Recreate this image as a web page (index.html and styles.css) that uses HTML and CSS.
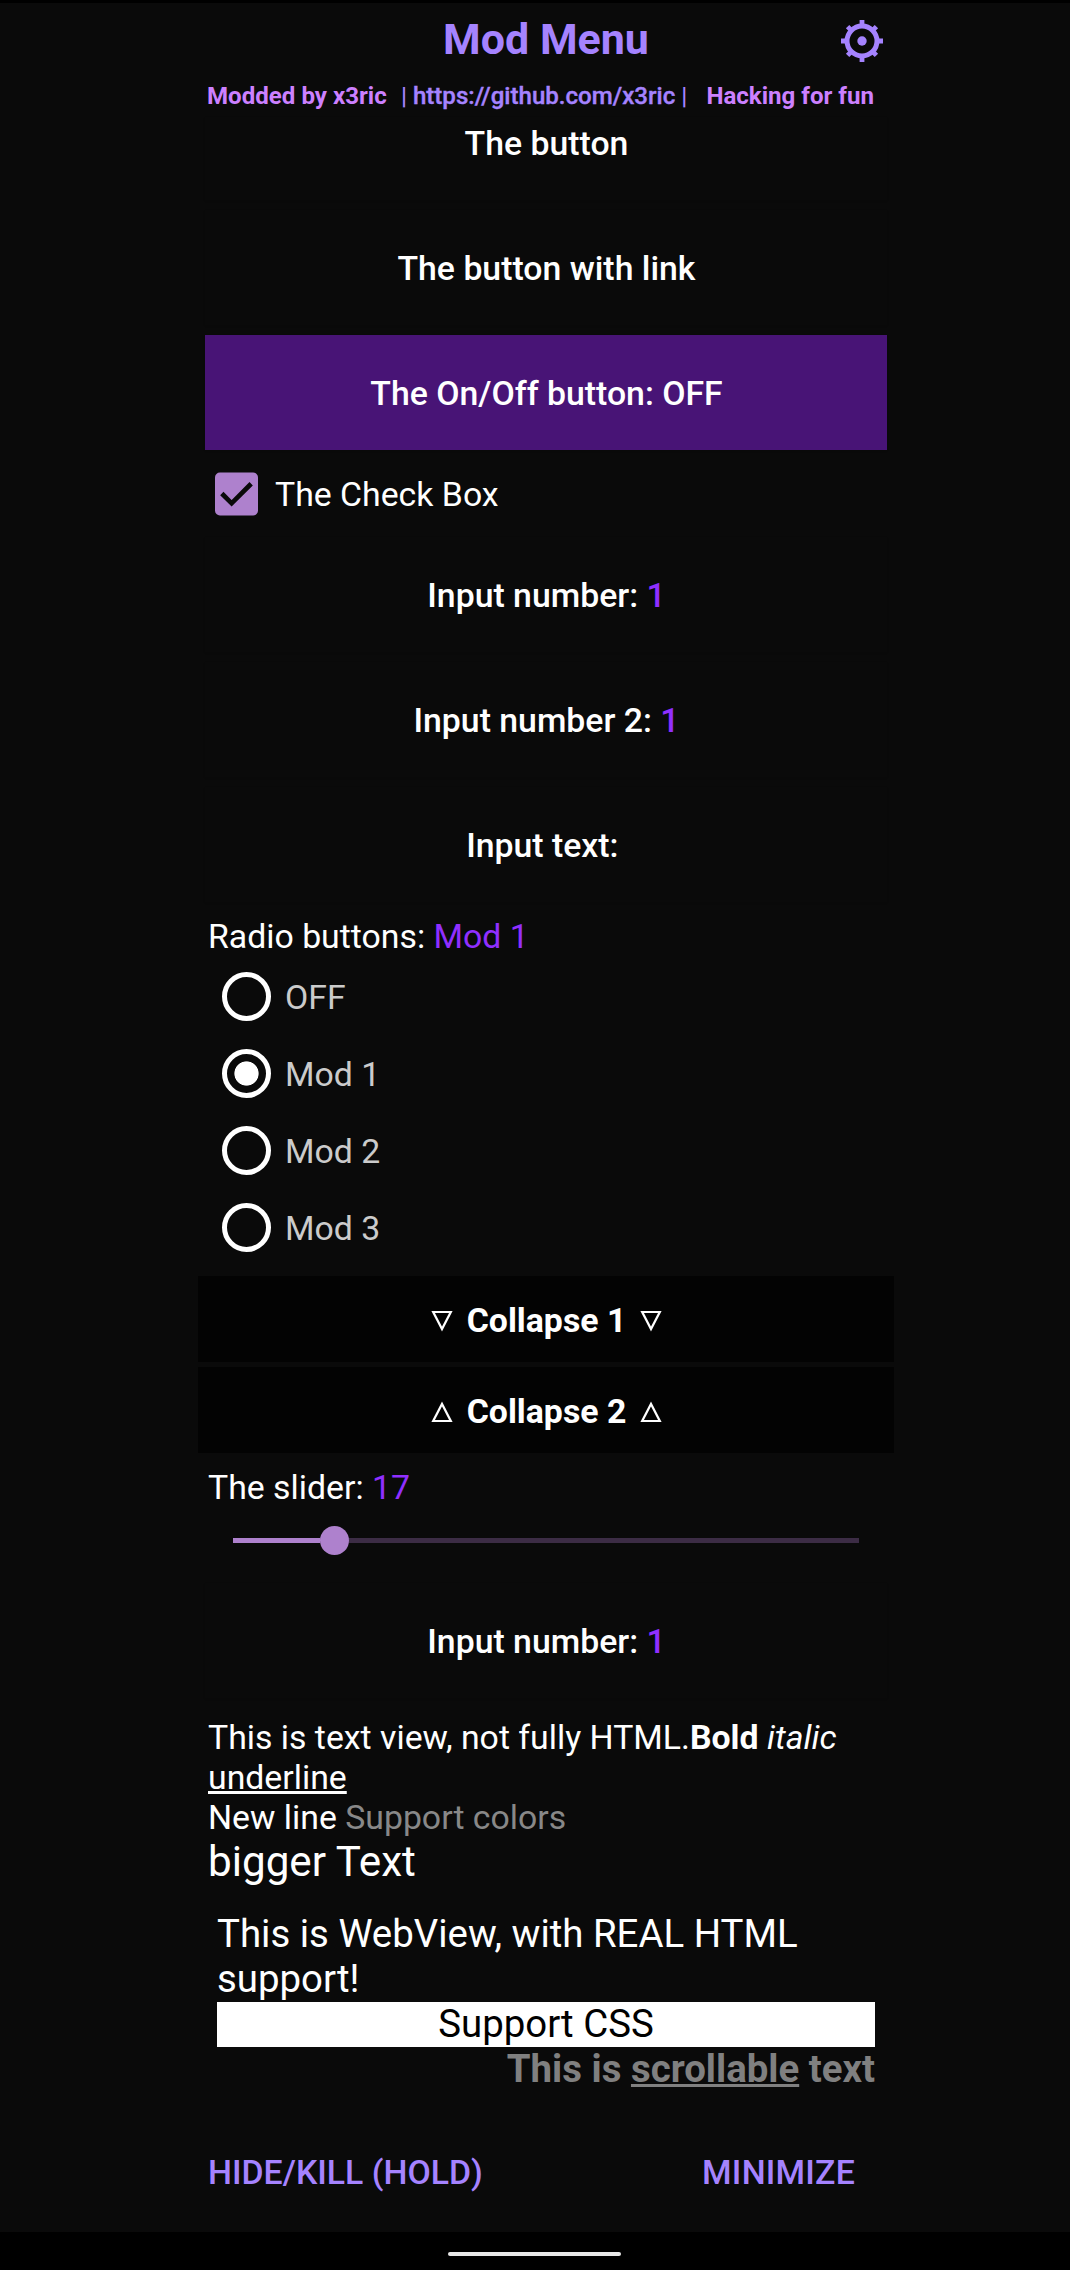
FILE: index.html
```html
<!DOCTYPE html>
<html lang="en">
<head>
<meta charset="utf-8">
<title>Mod Menu</title>
<link rel="stylesheet" href="styles.css">
</head>
<body>
<div class="screen">
  <main class="panel">
    <header class="header">
      <h1 class="title">Mod Menu</h1>
      <svg class="gear" viewBox="0 0 44 44" fill="none" stroke="#a583ff">
        <circle cx="22" cy="22" r="15" stroke-width="5"/>
        <circle cx="22" cy="22" r="4.7" fill="#a583ff" stroke="none"/>
        <path stroke-width="4.8" d="M22 1v6M22 37v6M1 22h6M37 22h6M7.6 7.6l4 4M32.4 32.4l4 4M7.6 36.4l4-4M32.4 11.6l4-4"/>
      </svg>
    </header>
    <div class="credits">
      <span>Modded by x3ric</span>
      <span class="link">| <span class="url">https://github.com/x3ric</span> |</span>
      <span>Hacking for fun</span>
    </div>

    <section class="list">
      <div class="button clipped">The button</div>
      <div class="button">The button with link</div>
      <div class="button on">The On/Off button: OFF</div>
      <div class="check-row">
        <svg class="check" viewBox="0 0 44 44">
          <rect width="44" height="44" rx="5" fill="#ae81cd"/>
          <path d="M7 21.500l10 10 20-20" fill="none" stroke="#0a0a0a" stroke-width="4.800"/>
        </svg>
        <span>The Check Box</span>
      </div>
      <div class="button">Input number:&nbsp;<span class="value">1</span></div>
      <div class="button">Input number 2:&nbsp;<span class="value">1</span></div>
      <div class="button">Input text:&nbsp;</div>

      <div class="caption radio-caption">Radio buttons: <span class="value">Mod 1</span></div>
      <div class="radios">
        <div class="radio"><i class="dot"></i><span>OFF</span></div>
        <div class="radio"><i class="dot selected"></i><span>Mod 1</span></div>
        <div class="radio"><i class="dot"></i><span>Mod 2</span></div>
        <div class="radio"><i class="dot"></i><span>Mod 3</span></div>
      </div>

      <div class="collapse">
        <svg class="tri" viewBox="0 0 22 22"><path d="M2.200 2h17.600L11 19z"/></svg>
        <span>Collapse 1</span>
        <svg class="tri" viewBox="0 0 22 22"><path d="M2.200 2h17.600L11 19z"/></svg>
      </div>
      <div class="collapse">
        <svg class="tri" viewBox="0 0 22 22"><path d="M2.200 20h17.600L11 3z"/></svg>
        <span>Collapse 2</span>
        <svg class="tri" viewBox="0 0 22 22"><path d="M2.200 20h17.600L11 3z"/></svg>
      </div>

      <div class="caption slider-caption">The slider: <span class="value">17</span></div>
      <div class="slider">
        <div class="filled"></div><div class="thumb"></div><div class="track"></div>
      </div>
      <div class="button">Input number:&nbsp;<span class="value">1</span></div>

      <div class="text-view">
        <div>This is text view, not fully HTML.<b>Bold</b> <em>italic</em> <u>underline</u></div>
        <div>New line <span class="muted">Support colors</span></div>
        <div class="bigger">bigger Text</div>
      </div>
      <div class="web-view">
        <div class="intro">This is WebView, with REAL HTML support!</div>
        <div class="css-bar">Support CSS</div>
        <div class="marquee">This is <u>scrollable</u> text</div>
      </div>
    </section>

    <footer class="actions"><span>HIDE/KILL (HOLD)</span><span class="minimize">MINIMIZE</span></footer>
  </main>
  <nav class="navbar"><div class="pill"></div></nav>
</div>
</body>
</html>
```
FILE: styles.css
```css
* { box-sizing: border-box; }
body {
  margin: 0;
  background: #0a0a0a;
  color: #fff;
  font: 400 33.800px/40px Roboto, sans-serif;
}
.screen {
  width: 1070px;
  height: 2270px;
  border-top: 3px solid #000;
  display: flex;
  flex-direction: column;
  overflow: hidden;
}
.panel {
  width: 696px;
  margin-left: 198px;
  height: 2229px;
  flex: none;
  display: flex;
  flex-direction: column;
}
.header {
  height: 76px;
  flex: none;
  display: grid;
  grid-template-columns: 1fr auto 1fr;
  align-items: center;
}
.title {
  grid-column: 2;
  margin: 0;
  padding-bottom: 5px;
  font-size: 43px;
  line-height: 50px;
  font-weight: 700;
  color: #a583ff;
}
.gear { width: 44px; height: 44px; justify-self: end; margin-right: 10px; }
.credits {
  height: 35px;
  flex: none;
  padding: 0 20px 0 9px;
  display: flex;
  justify-content: space-between;
  font-size: 24.100px;
  line-height: 34px;
  font-weight: 700;
  color: #cc80ff;
  white-space: nowrap;
}
.link { color: #a583ff; font-weight: 500; margin-right: 5px; }
.url { -webkit-text-stroke: .4px #a583ff; }
.list { flex: none; }
.button {
  height: 115px;
  margin: 0 7px 10px;
  padding: 3px 0 0 1px;
  display: flex;
  align-items: center;
  justify-content: center;
  font-weight: 500;
  box-shadow: 0 1px 2px rgba(0, 0, 0, .1);
}
.clipped { height: 83px; margin-top: 3px; align-items: flex-start; padding-top: 7px; }
.on { background: #481476; }
.value { color: #902fff; }
.check-row {
  height: 77px;
  display: flex;
  align-items: center;
  gap: 17px;
  padding: 0 0 10px 17px;
}
.check-row span { padding-top: 2px; }
.check { width: 43px; height: 44px; }
.caption { padding-left: 10px; }
.radio-caption { padding-top: 5px; height: 46px; }
.radios { height: 318px; }
.radio {
  height: 77px;
  padding-left: 24px;
  display: flex;
  align-items: center;
  gap: 14px;
  color: #cbcbcb;
}
.radio span { padding-top: 2px; }
.dot {
  width: 49px;
  height: 49px;
  border: 5px solid #fff;
  border-radius: 50%;
}
.selected { background: radial-gradient(circle, #fff 11.700px, transparent 12.500px); }
.collapse {
  height: 86px;
  margin-bottom: 5px;
  padding: 4px 0 0 1px;
  background: #030303;
  display: flex;
  align-items: center;
  justify-content: center;
  gap: 14px;
  font-weight: 700;
}
.tri { width: 22px; height: 22px; fill: none; stroke: #fff; stroke-width: 2.200; }
.slider-caption { height: 57px; padding-top: 10px; }
.slider {
  height: 68px;
  padding: 11px 35px 0;
  display: flex;
  align-items: flex-start;
}
.filled, .track { height: 5px; margin-top: 12px; }
.filled { width: 86.500px; background: #ae81cd; }
.thumb { width: 29px; height: 29px; border-radius: 50%; background: #ae81cd; }
.track { flex: 1; background: #3c2c45; }
.text-view { padding: 10px 10px 0; height: 192px; }
.bigger { font-size: 42.200px; line-height: 48px; }
.muted { color: #888; }
.web-view {
  padding: 11px 19px 0;
  font-size: 38.400px;
  line-height: 45px;
}
.intro { padding-bottom: 1px; }
.css-bar {
  height: 45px;
  line-height: 43px;
  background: #fff;
  color: #000;
  text-align: center;
}
.marquee { color: #808080; font-weight: 700; text-align: right; line-height: 43px; }
.actions {
  margin-top: auto;
  padding: 0 39px 39px 10px;
  display: flex;
  justify-content: space-between;
  font-weight: 500;
  color: #a583ff;
}
.minimize { letter-spacing: .2px; }
.navbar {
  height: 38px;
  flex: none;
  background: #000;
  padding: 20px 0 0 448px;
}
.pill { width: 173px; height: 4px; border-radius: 2px; background: #e8e8e8; }
```
